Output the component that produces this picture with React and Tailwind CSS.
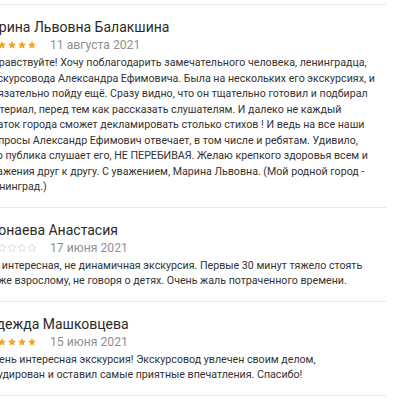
import React from "react";

const reviews = [
  {
    name: "Марина Львовна Балакшина",
    rating: 5,
    date: "11 августа 2021",
    lines: [
      "Здравствуйте! Хочу поблагодарить замечательного человека, ленинградца,",
      "экскурсовода Александра Ефимовича. Была на нескольких его экскурсиях, и",
      "обязательно пойду ещё. Сразу видно, что он тщательно готовил и подбирал",
      "материал, перед тем как рассказать слушателям. И далеко не каждый",
      "знаток города сможет декламировать столько стихов ! И ведь на все наши",
      "вопросы Александр Ефимович отвечает, в том числе и ребятам. Удивило,",
      "что публика слушает его, НЕ ПЕРЕБИВАЯ. Желаю крепкого здоровья всем и",
      "уважения друг к другу. С уважением, Марина Львовна. (Мой родной город -",
      "Ленинград.)",
    ],
  },
  {
    name: "Афонаева Анастасия",
    rating: 1,
    date: "17 июня 2021",
    lines: [
      "Не интересная, не динамичная экскурсия. Первые 30 минут тяжело стоять",
      "даже взрослому, не говоря о детях. Очень жаль потраченного времени.",
    ],
  },
  {
    name: "Надежда Машковцева",
    rating: 5,
    date: "15 июня 2021",
    lines: [
      "Очень интересная экскурсия! Экскурсовод увлечен своим делом,",
      "эрудирован и оставил самые приятные впечатления. Спасибо!",
    ],
  },
];

function Star({ filled }) {
  return (
    <svg width="10" height="10" viewBox="0 0 24 24" className="shrink-0">
      <path
        d="M12 2.5l2.9 6.1 6.6.8-4.9 4.6 1.3 6.6L12 17.3l-5.9 3.3 1.3-6.6-4.9-4.6 6.6-.8z"
        fill={filled ? "#f4a52a" : "none"}
        stroke={filled ? "#f4a52a" : "#d2d2d2"}
        strokeWidth={filled ? 0 : 1.6}
        strokeLinejoin="round"
      />
    </svg>
  );
}

function Review({ review, last }) {
  return (
    <div className={`border-t border-[#e8e8e8] pt-[13px] pb-[12px] ${last ? "border-b" : ""}`}>
      <div className="-ml-[7px] h-[18px] whitespace-nowrap text-[14px] leading-[18px] text-[#2a2a2a]">
        {review.name}
      </div>
      <div className="flex h-[18px] items-center">
        <div className="flex w-[64px] pl-[1px]">
          {[0, 1, 2, 3, 4].map((i) => (
            <Star key={i} filled={i < review.rating} />
          ))}
        </div>
        <span className="text-[12.2px] leading-[18px] text-[#8f8f8f]">{review.date}</span>
      </div>
      <div className="mt-[1px] text-[10.65px] leading-[15.5px] text-[#333]">
        {review.lines.map((l, i) => (
          <div key={i} className="whitespace-nowrap">
            {l}
          </div>
        ))}
      </div>
    </div>
  );
}

export default function App() {
  return (
    <div className="h-[400px] w-[400px] overflow-hidden bg-white font-['Roboto',sans-serif]">
      <div className="ml-[-14px] mt-[4px] w-[400px]">
        {reviews.map((r, i) => (
          <Review key={i} review={r} last={i === reviews.length - 1} />
        ))}
      </div>
    </div>
  );
}
